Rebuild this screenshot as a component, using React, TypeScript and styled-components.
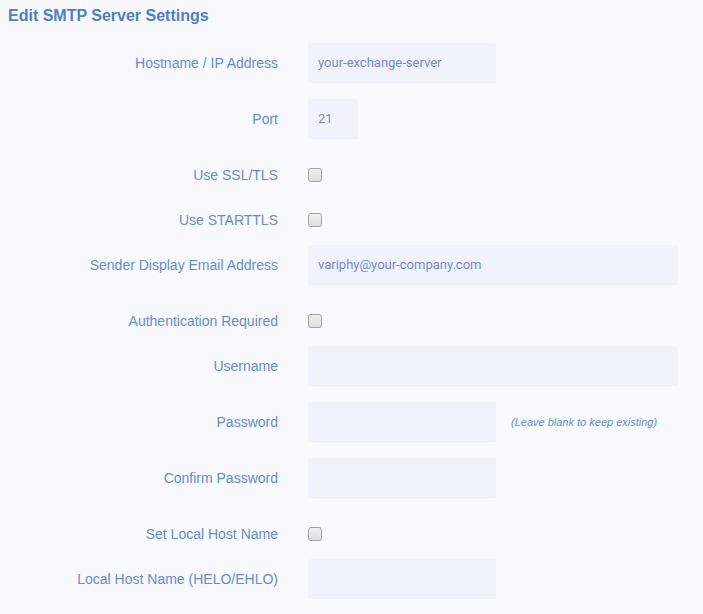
import styled, { createGlobalStyle } from 'styled-components';

const GlobalStyle = createGlobalStyle`
  html, body {
    margin: 0;
    padding: 0;
    background: #f8f9fd;
  }
  body {
    font-family: 'Liberation Sans', Arial, sans-serif;
  }
`;

const Page = styled.div`
  width: 703px;
  min-height: 614px;
  padding: 8px 8px 0 8px;
  box-sizing: border-box;
  background: #f8f9fd;
`;

const Title = styled.h2`
  margin: 0 0 19px 0;
  font-size: 16px;
  font-weight: bold;
  line-height: 16px;
  color: #4b7fcd;
`;

const Form = styled.form`
  display: flex;
  flex-direction: column;
`;

const Row = styled.div<{ $compact?: boolean }>`
  display: grid;
  grid-template-columns: 270px auto;
  column-gap: 30px;
  align-items: center;
  height: 40px;
  margin-bottom: ${(p) => (p.$compact ? '5px' : '16px')};
`;

const Label = styled.label`
  text-align: right;
  font-size: 14px;
  color: #5f8ddb;
  white-space: nowrap;
`;

const Field = styled.div`
  display: flex;
  align-items: center;
  gap: 15px;
`;

const Input = styled.input<{ $size: 'xs' | 'md' | 'lg' }>`
  box-sizing: border-box;
  height: 40px;
  width: ${(p) => (p.$size === 'xs' ? '50px' : p.$size === 'md' ? '188px' : '370px')};
  padding: 0 10px;
  border: none;
  border-bottom: 1px solid #eceff8;
  border-radius: 3px;
  background: #f0f3fc;
  font-family: Roboto, 'Liberation Sans', sans-serif;
  font-size: 13px;
  color: #7288d6;
  outline: none;
`;

const Check = styled.input.attrs({ type: 'checkbox' })`
  appearance: none;
  margin: 0;
  width: 14px;
  height: 14px;
  box-sizing: border-box;
  border: 1px solid #a3a3a3;
  border-radius: 3px;
  background: linear-gradient(#efefef, #dedede);
`;

const Hint = styled.span`
  font-size: 11px;
  font-style: italic;
  color: #5f8ddb;
`;

export default function App() {
  return (
    <Page>
      <GlobalStyle />
      <Title>Edit SMTP Server Settings</Title>
      <Form>
        <Row>
          <Label>Hostname / IP Address</Label>
          <Field>
            <Input $size="md" defaultValue="your-exchange-server" />
          </Field>
        </Row>
        <Row>
          <Label>Port</Label>
          <Field>
            <Input $size="xs" defaultValue="21" />
          </Field>
        </Row>
        <Row $compact>
          <Label>Use SSL/TLS</Label>
          <Field>
            <Check />
          </Field>
        </Row>
        <Row $compact>
          <Label>Use STARTTLS</Label>
          <Field>
            <Check />
          </Field>
        </Row>
        <Row>
          <Label>Sender Display Email Address</Label>
          <Field>
            <Input $size="lg" defaultValue="variphy@your-company.com" />
          </Field>
        </Row>
        <Row $compact>
          <Label>Authentication Required</Label>
          <Field>
            <Check />
          </Field>
        </Row>
        <Row>
          <Label>Username</Label>
          <Field>
            <Input $size="lg" />
          </Field>
        </Row>
        <Row>
          <Label>Password</Label>
          <Field>
            <Input $size="md" type="password" />
            <Hint>(Leave blank to keep existing)</Hint>
          </Field>
        </Row>
        <Row>
          <Label>Confirm Password</Label>
          <Field>
            <Input $size="md" type="password" />
          </Field>
        </Row>
        <Row $compact>
          <Label>Set Local Host Name</Label>
          <Field>
            <Check />
          </Field>
        </Row>
        <Row>
          <Label>Local Host Name (HELO/EHLO)</Label>
          <Field>
            <Input $size="md" />
          </Field>
        </Row>
      </Form>
    </Page>
  );
}
